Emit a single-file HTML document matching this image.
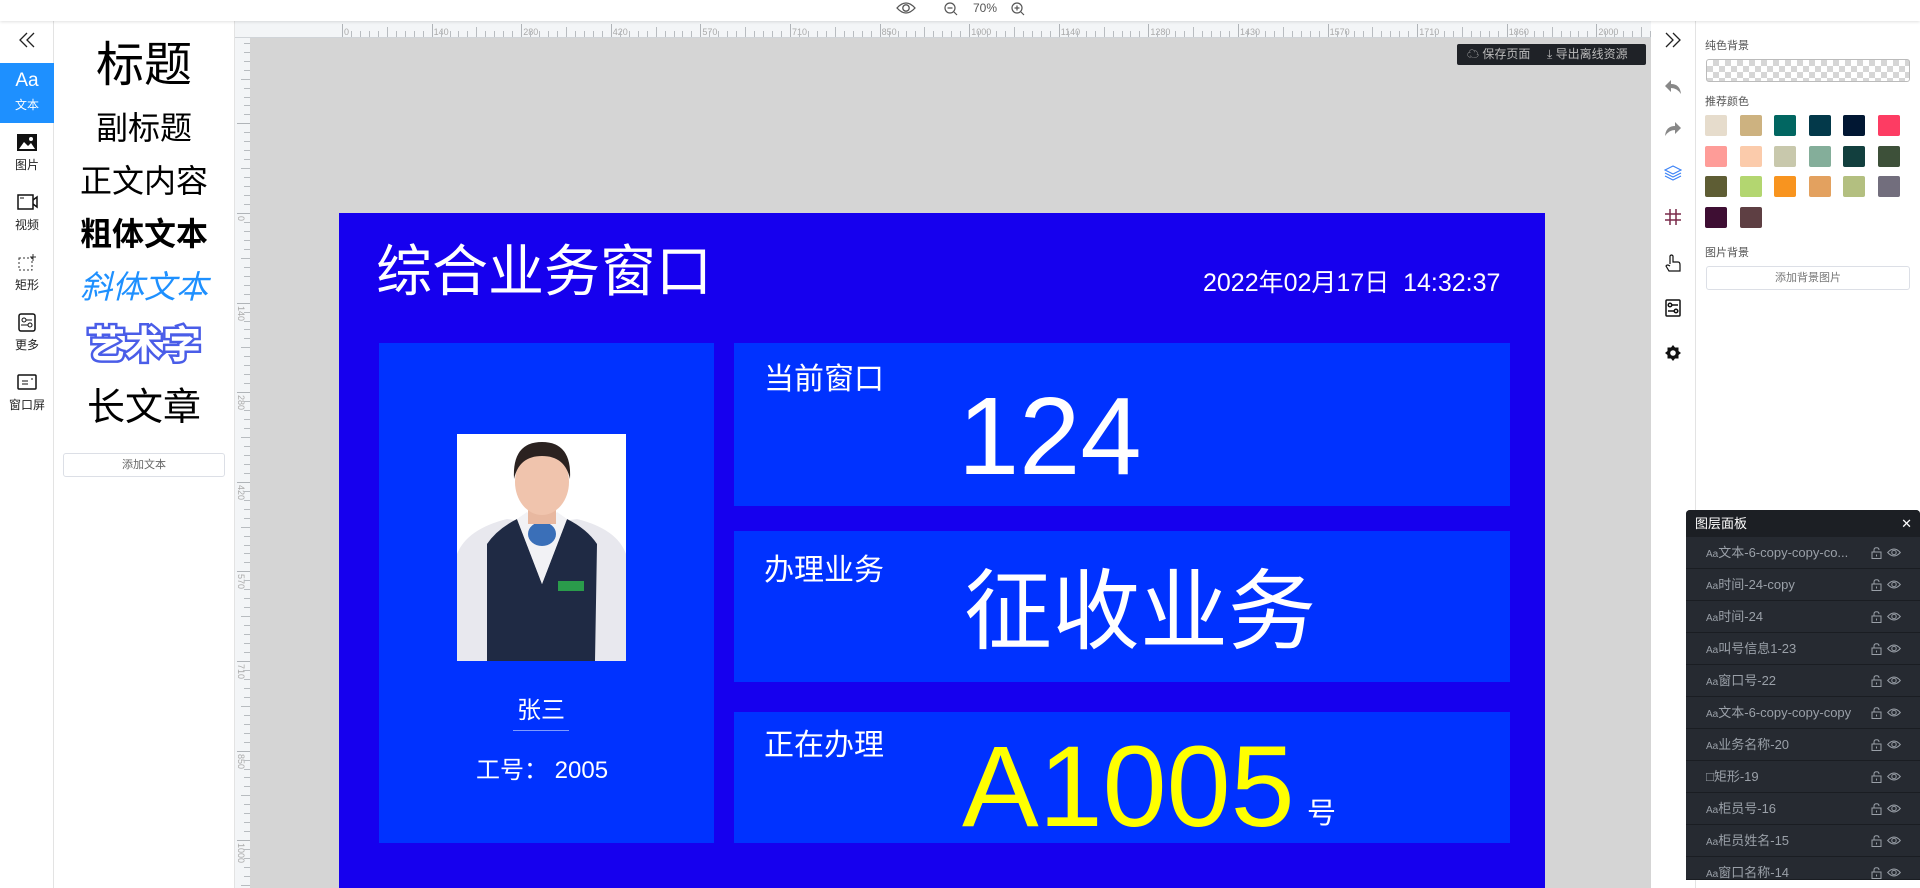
<!DOCTYPE html>
<html style="overflow:hidden;width:1920px;height:888px"><head><meta charset="utf-8"><style>
*{box-sizing:border-box;margin:0;padding:0}
body{width:1920px;height:888px;overflow:hidden;position:relative;background:#fff;font-family:"Liberation Sans","Noto Sans CJK SC",sans-serif;color:#000}
.a{position:absolute}
.c{position:absolute;white-space:nowrap}
.sideitem{position:absolute;left:0;width:54px;text-align:center;font-size:12px;color:#222}
.txt{position:absolute;left:54px;width:180px;text-align:center;white-space:nowrap}
.sw{position:absolute;width:22px;height:21px;border-radius:2px}
.row{position:absolute;left:1686px;width:234px;height:32px;border-bottom:1px solid #1a1d22;color:#9aa0a8;font-size:13px;line-height:31px;padding-left:20px}
.row svg{position:absolute;top:10px}
</style></head><body>
<!-- top bar -->
<div class="a" style="left:0;top:0;width:1920px;height:21px;background:#fff;box-shadow:0 1px 3px rgba(0,0,0,.12);z-index:3"></div>
<svg class="a" style="left:896px;top:1px;z-index:4" width="20" height="14" viewBox="0 0 20 14"><path d="M1 7 Q10 -3 19 7 Q10 17 1 7Z" fill="none" stroke="#555" stroke-width="1.3"/><circle cx="10" cy="7" r="3.2" fill="none" stroke="#555" stroke-width="1.3"/></svg>
<svg class="a" style="left:944px;top:2px;z-index:4" width="14" height="14" viewBox="0 0 14 14"><circle cx="6" cy="6" r="5" fill="none" stroke="#555" stroke-width="1.2"/><path d="M3.5 6h5M10 10l3 3" stroke="#555" stroke-width="1.2"/></svg>
<div class="c" style="left:973px;top:1px;font-size:12px;color:#555;z-index:4">70%</div>
<svg class="a" style="left:1011px;top:2px;z-index:4" width="14" height="14" viewBox="0 0 14 14"><circle cx="6" cy="6" r="5" fill="none" stroke="#555" stroke-width="1.2"/><path d="M3.5 6h5M6 3.5v5M10 10l3 3" stroke="#555" stroke-width="1.2"/></svg>

<!-- left icon sidebar -->
<div class="a" style="left:0;top:21px;width:54px;height:867px;background:#fff;border-right:1px solid #e3e3e3"></div>
<svg class="a" style="left:19px;top:32px" width="16" height="16" viewBox="0 0 16 16" fill="none" stroke="#222" stroke-width="1.3"><path d="M8 1 L1 8 L8 15M15 1 L8 8 L15 15"/></svg>
<div class="a" style="left:0;top:63px;width:54px;height:60px;background:#1e90ff"></div>
<div class="sideitem" style="top:70px;color:#fff;font-size:19px">Aa</div>
<div class="sideitem" style="top:96px;color:#fff">文本</div>
<svg class="a" style="left:17px;top:134px" width="20" height="17"><rect x="0" y="0" width="20" height="17" fill="#111"/><path d="M2 15 L7 8 L11 12 L14 9 L18 15Z" fill="#fff"/><circle cx="14" cy="5" r="2" fill="#fff"/></svg>
<div class="sideitem" style="top:156px">图片</div>
<svg class="a" style="left:17px;top:194px" width="21" height="16"><rect x="1" y="1" width="15" height="14" fill="none" stroke="#111" stroke-width="1.5"/><path d="M16 6 L20 3 V13 L16 10" fill="none" stroke="#111" stroke-width="1.5"/><path d="M3 4h4" stroke="#111"/></svg>
<div class="sideitem" style="top:216px">视频</div>
<svg class="a" style="left:18px;top:254px" width="18" height="17"><rect x="1" y="4" width="13" height="12" fill="none" stroke="#333" stroke-dasharray="2 2"/><path d="M15 0v7M12 3h7" stroke="#333"/></svg>
<div class="sideitem" style="top:276px">矩形</div>
<svg class="a" style="left:18px;top:313px" width="18" height="19"><rect x="1" y="1" width="16" height="17" rx="2" fill="none" stroke="#111" stroke-width="1.5"/><circle cx="6" cy="7" r="2" fill="none" stroke="#111"/><circle cx="12" cy="12" r="2" fill="none" stroke="#111"/><path d="M8 7h6M3 12h7" stroke="#111"/></svg>
<div class="sideitem" style="top:336px">更多</div>
<svg class="a" style="left:17px;top:374px" width="20" height="16"><rect x="1" y="1" width="18" height="14" rx="1" fill="none" stroke="#111" stroke-width="1.5"/><path d="M5 7h6M5 10h6M14 5h2" stroke="#111"/></svg>
<div class="sideitem" style="top:396px">窗口屏</div>

<!-- text panel -->
<div class="txt" style="top:38px;font-size:48px;line-height:56px">标题</div>
<div class="txt" style="top:108px;font-size:32px;line-height:40px">副标题</div>
<div class="txt" style="top:161px;font-size:32px;line-height:40px">正文内容</div>
<div class="txt" style="top:214px;font-size:32px;line-height:40px;font-weight:bold">粗体文本</div>
<div class="txt" style="top:267px;font-size:32px;line-height:40px;font-style:italic;color:#1e90ff">斜体文本</div>
<div class="txt" style="top:324px;font-size:38px;line-height:44px;font-weight:bold;color:#fff;-webkit-text-stroke:5px #4a5de8;paint-order:stroke fill">艺术字</div>
<div class="txt" style="top:386px;font-size:38px;line-height:44px">长文章</div>
<div class="a" style="left:63px;top:453px;width:162px;height:24px;border:1px solid #dcdfe6;border-radius:3px;font-size:11px;color:#666;text-align:center;line-height:22px">添加文本</div>
<div class="a" style="left:234px;top:21px;width:1px;height:867px;background:#e3e3e3"></div>

<!-- canvas area -->
<div class="a" style="left:235px;top:21px;width:1416px;height:867px;background:#f3f5f7;overflow:hidden"></div>
<div class="a" style="left:250px;top:38px;width:1401px;height:850px;background:#d5d5d5"></div>
<div class="a" style="left:235px;top:37px;width:1416px;height:1px;background:#d0d4d8"></div>
<div id="hr" class="a" style="left:0;top:21px;width:1651px;height:17px;overflow:hidden"></div>
<div id="vr" class="a" style="left:235px;top:38px;width:15px;height:850px;overflow:hidden"></div>

<!-- save toolbar -->
<div class="a" style="left:1457px;top:44px;width:189px;height:21px;background:#1f2227;border-radius:2px;color:#bbb;font-size:12px;line-height:21px">
<span class="c" style="left:10px;top:0">☁ 保存页面</span><span class="c" style="left:90px;top:0">⤓ 导出离线资源</span></div>

<!-- board -->
<div class="a" style="left:339px;top:213px;width:1206px;height:675px;background:#1600ee"></div>
<div class="c" style="left:376px;top:238px;font-size:56px;line-height:68px;color:#fff">综合业务窗口</div>
<div class="c" style="left:1203px;top:268px;font-size:25px;line-height:30px;color:#fff">2022年02月17日&nbsp;&nbsp;14:32:37</div>

<div class="a" style="left:379px;top:343px;width:335px;height:500px;background:#0032ff"></div>
<svg class="a" style="left:457px;top:434px" width="169" height="227" viewBox="0 0 169 227">
<rect width="169" height="227" fill="#fff"/>
<path d="M0 227 V120 Q10 95 50 85 L85 90 L120 85 Q160 95 169 120 V227Z" fill="#e8e8ee"/>
<path d="M30 227 L30 110 Q40 95 60 85 L85 150 L110 85 Q130 95 140 110 L138 227Z" fill="#1f2a44"/>
<path d="M60 85 L85 150 L110 85 L100 78 L85 95 L70 78Z" fill="#f2f2f5"/>
<ellipse cx="85" cy="100" rx="14" ry="12" fill="#3a6fb8"/>
<rect x="71" y="68" width="28" height="22" fill="#e8b8a0"/>
<ellipse cx="85" cy="48" rx="27" ry="33" fill="#f0c4ad"/>
<path d="M57 45 Q55 8 85 8 Q115 8 113 45 Q108 22 85 22 Q62 22 57 45Z" fill="#2b2220"/>
<rect x="101" y="147" width="26" height="10" fill="#2a9b4b"/>
</svg>
<div class="c" style="left:513px;top:697px;width:56px;text-align:center;font-size:24px;line-height:28px;color:#fff">张三</div>
<div class="a" style="left:513px;top:730px;width:56px;height:1px;background:#7e9bff"></div>
<div class="c" style="left:476px;top:756px;font-size:24px;line-height:30px;color:#fff">工号： 2005</div>

<div class="a" style="left:734px;top:343px;width:776px;height:163px;background:#0032ff"></div>
<div class="a" style="left:734px;top:531px;width:776px;height:151px;background:#0032ff"></div>
<div class="a" style="left:734px;top:712px;width:776px;height:131px;background:#0032ff"></div>
<div class="c" style="left:764px;top:362px;font-size:30px;line-height:36px;color:#fff">当前窗口</div>
<div class="c" style="left:764px;top:553px;font-size:30px;line-height:36px;color:#fff">办理业务</div>
<div class="c" style="left:764px;top:728px;font-size:30px;line-height:36px;color:#fff">正在办理</div>
<div class="c" style="left:958px;top:374px;font-size:110px;line-height:126px;color:#fff">124</div>
<div class="c" style="left:964px;top:562px;font-size:88px;line-height:100px;color:#fff">征收业务</div>
<div class="c" style="left:962px;top:722px;font-size:115px;line-height:130px;color:#ffff00">A1005</div>
<div class="c" style="left:1307px;top:797px;font-size:29px;line-height:34px;color:#fff">号</div>

<!-- right toolbar -->
<div class="a" style="left:1651px;top:21px;width:44px;height:867px;background:#fff"></div>
<svg class="a" style="left:1665px;top:32px" width="16" height="16" viewBox="0 0 16 16" fill="none" stroke="#222" stroke-width="1.3"><path d="M1 1 L8 8 L1 15M8 1 L15 8 L8 15"/></svg>
<svg class="a" style="left:1664px;top:79px" width="18" height="16" viewBox="0 0 18 16"><path d="M7 1 L1 7 L7 13 V9 Q13 9 17 15 Q16 5 7 5Z" fill="#888"/></svg>
<svg class="a" style="left:1664px;top:121px" width="18" height="16" viewBox="0 0 18 16"><path d="M11 1 L17 7 L11 13 V9 Q5 9 1 15 Q2 5 11 5Z" fill="#888"/></svg>
<svg class="a" style="left:1664px;top:165px" width="18" height="16" viewBox="0 0 18 16" fill="none" stroke="#3b82f6" stroke-width="1.2"><path d="M9 1 L17 5 L9 9 L1 5Z"/><path d="M1 8 L9 12 L17 8"/><path d="M1 11 L9 15 L17 11"/></svg>
<svg class="a" style="left:1665px;top:209px" width="16" height="16" stroke="#7a2a4a" stroke-width="1.5"><path d="M5 0v16M11 0v16M0 5h16M0 11h16"/></svg>
<svg class="a" style="left:1665px;top:254px" width="16" height="18" viewBox="0 0 16 18" fill="none" stroke="#111" stroke-width="1.2"><path d="M5 10 V2 Q6.5 0 8 2 V8 H13 Q15 8 15 11 V17 H4 L1 12 Q2 10 5 12"/></svg>
<svg class="a" style="left:1665px;top:299px" width="16" height="18" fill="none" stroke="#111" stroke-width="1.5"><rect x="1" y="1" width="14" height="16" rx="1"/><circle cx="5" cy="6" r="1.8"/><circle cx="11" cy="12" r="1.8"/><path d="M7 6h6M3 12h6"/></svg>
<svg class="a" style="left:1665px;top:345px" width="16" height="16" viewBox="0 0 16 16"><path d="M8 0 L10 2.5 L13.5 2.5 L13.5 6 L16 8 L13.5 10 L13.5 13.5 L10 13.5 L8 16 L6 13.5 L2.5 13.5 L2.5 10 L0 8 L2.5 6 L2.5 2.5 L6 2.5Z" fill="#111"/><circle cx="8" cy="8" r="2.8" fill="#fff"/></svg>
<div class="a" style="left:1695px;top:21px;width:1px;height:867px;background:#e3e3e3"></div>

<!-- right panel -->
<div class="c" style="left:1705px;top:37px;font-size:11px;color:#555">纯色背景</div>
<div class="a" style="left:1706px;top:59px;width:204px;height:23px;border:1px solid #bbb;border-radius:3px;background-color:#fff;background-image:linear-gradient(45deg,#d6d6d6 25%,transparent 25%,transparent 75%,#d6d6d6 75%),linear-gradient(45deg,#d6d6d6 25%,transparent 25%,transparent 75%,#d6d6d6 75%);background-size:12px 12px;background-position:0 0,6px 6px"></div>
<div class="c" style="left:1705px;top:93px;font-size:11px;color:#555">推荐颜色</div>
<div id="sws"></div>
<div class="c" style="left:1705px;top:244px;font-size:11px;color:#555">图片背景</div>
<div class="a" style="left:1706px;top:266px;width:204px;height:24px;border:1px solid #dcdfe6;border-radius:3px;font-size:11px;color:#777;text-align:center;line-height:22px">添加背景图片</div>

<!-- layer panel -->
<div class="a" style="left:1686px;top:510px;width:234px;height:370px;background:#262a31;border-radius:4px 4px 0 0;overflow:hidden">
<div class="a" style="left:0;top:0;width:234px;height:27px;background:#1c1f24;color:#fff;font-size:13px;line-height:27px;padding-left:9px">图层面板<span class="c" style="right:8px;top:0;left:auto">✕</span></div>
</div>
<div id="rows"></div>

<script>
var hr=document.getElementById('hr'),h='';
var labs=[0,140,280,420,570,710,850,1000,1140,1280,1430,1570,1710,1860,2000];
for(var i=0;i<15;i++){var x=342+i*89.6;
h+='<div class="a" style="left:'+x+'px;top:3px;width:1px;height:13px;background:#b0b4b8"></div>';
h+='<div class="c" style="left:'+(x+2)+'px;top:6px;font-size:9px;color:#aaa">'+labs[i]+'</div>';
for(var k=1;k<10;k++){h+='<div class="a" style="left:'+(x+k*8.96)+'px;top:'+(k==5?6:10)+'px;width:1px;height:'+(k==5?10:6)+'px;background:#b8bcc0"></div>';}}
hr.innerHTML=h;
var vr=document.getElementById('vr');h='';
var vl=[0,140,280,420,570,710,850,1000];
for(i=-2;i<8;i++){var y=175+i*89.6;
h+='<div class="a" style="left:2px;top:'+y+'px;width:13px;height:1px;background:#b0b4b8"></div>';
if(i>=0)h+='<div class="c" style="left:3px;top:'+(y+3)+'px;font-size:9px;color:#aaa;transform:rotate(90deg);transform-origin:4px 4px">'+vl[i]+'</div>';
for(k=1;k<10;k++)h+='<div class="a" style="left:'+(k==5?6:9)+'px;top:'+(y+k*8.96)+'px;width:'+(k==5?9:6)+'px;height:1px;background:#b8bcc0"></div>';}
vr.innerHTML=h;
var cols=['#e6dccc','#cdb280','#016661','#03394a','#011733','#fd3c63','#fe9c98','#fbcbab','#c8c8ac','#84ae9a','#123f3e','#3d5039','#5e5d34','#b3d670','#f8941f','#e3a15f','#b3bf80','#726e7d','#3e0e33','#5e3f43'];
h='';for(i=0;i<cols.length;i++){h+='<div class="sw" style="left:'+(1705+(i%6)*34.5)+'px;top:'+(115+Math.floor(i/6)*30.5)+'px;background:'+cols[i]+'"></div>';}
document.getElementById('sws').innerHTML=h;
var names=['Aa文本-6-copy-copy-co...','Aa时间-24-copy','Aa时间-24','Aa叫号信息1-23','Aa窗口号-22','Aa文本-6-copy-copy-copy','Aa业务名称-20','□矩形-19','Aa柜员号-16','Aa柜员姓名-15','Aa窗口名称-14'];
var lock='<svg style="left:185px" width="11" height="12" viewBox="0 0 11 12" fill="none" stroke="#9aa0a8" stroke-width="1"><rect x="1" y="5" width="9" height="6.5"/><path d="M3 5 V3 Q3 0.8 5.5 0.8 Q8 0.8 8 3"/><path d="M5.5 7.5v2"/></svg>';
var eye='<svg style="left:201px" width="14" height="11" viewBox="0 0 14 11" fill="none" stroke="#9aa0a8" stroke-width="1"><path d="M0.7 5.5 Q7 -1.5 13.3 5.5 Q7 12.5 0.7 5.5Z"/><circle cx="7" cy="5.5" r="2.2"/></svg>';
h='';for(i=0;i<names.length;i++){var t=537+i*32;if(t>880)break;
h+='<div class="row" style="top:'+t+'px;height:'+Math.min(32,880-t)+'px;overflow:hidden">'+names[i].replace(/^Aa/,'<span style="font-size:10px">Aa</span>')+lock+eye+'</div>';}
document.getElementById('rows').innerHTML=h;
</script>
</body></html>
